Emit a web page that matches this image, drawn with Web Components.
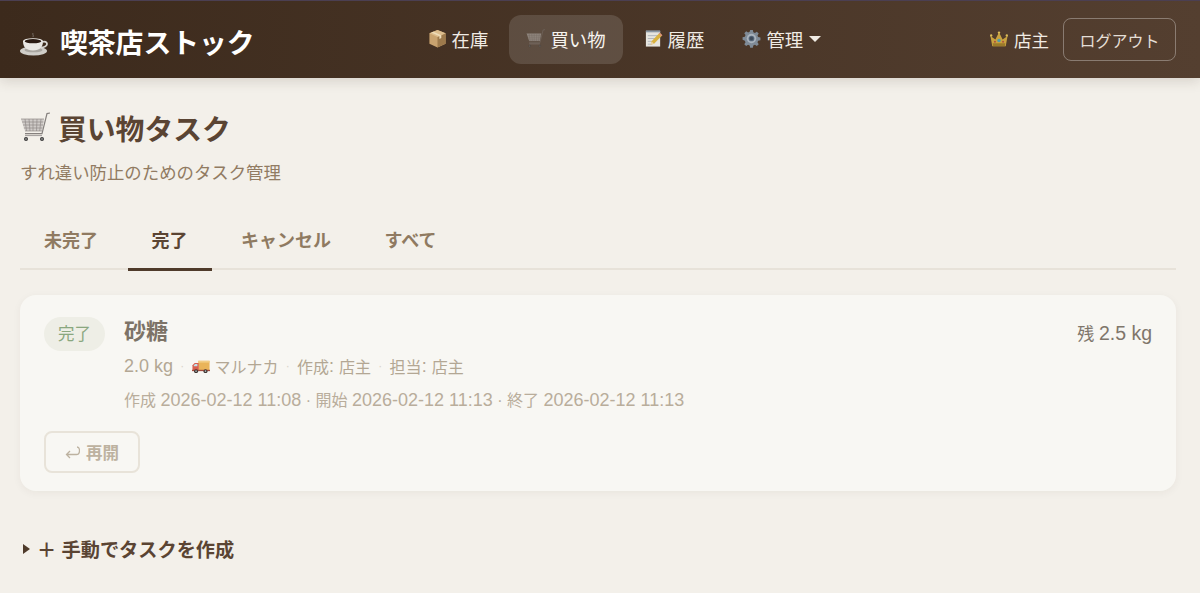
<!DOCTYPE html>
<html lang="ja">
<head>
<meta charset="utf-8">
<title>喫茶店ストック</title>
<style>
  html, body { margin: 0; padding: 0; }
  body {
    background: #f3f0ea;
    color: #5a4433;
    font-family: "Liberation Sans", "Noto Sans CJK JP", sans-serif;
    height: 593px;
    overflow: hidden;
  }
</style>
</head>
<body>
<app-header>
  <nav-link icon="box">在庫</nav-link>
  <nav-link icon="cart" active>買い物</nav-link>
  <nav-link icon="memo">履歴</nav-link>
  <nav-link icon="gear" caret>管理</nav-link>
</app-header>
<page-main>
  <page-title>買い物タスク<span slot="sub">すれ違い防止のためのタスク管理</span></page-title>
  <tab-bar>
    <tab-item>未完了</tab-item>
    <tab-item active>完了</tab-item>
    <tab-item>キャンセル</tab-item>
    <tab-item>すべて</tab-item>
  </tab-bar>
  <task-card></task-card>
  <manual-create>＋ 手動でタスクを作成</manual-create>
</page-main>

<script>
  const icons = {
    cup: `<svg viewBox="0 0 28 24"><path d="M13 1c-1 1.500 1 2 0 4" fill="none" stroke="#8d8780" stroke-width="1" opacity=".7"/><ellipse cx="13.500" cy="19" rx="13.500" ry="4.500" fill="#cfcdc8"/><ellipse cx="13.500" cy="18" rx="9" ry="2.300" fill="#a9a6a0"/><path d="M3 9h20c0 6-3 9.500-10 9.500S3 15 3 9z" fill="#e9e7e3"/><path d="M22 10c3-1 5 0 5 2s-3 3.500-6 3.500" fill="none" stroke="#d9d7d2" stroke-width="1.800"/><ellipse cx="13" cy="9" rx="10" ry="2.800" fill="#f4f3ef"/><ellipse cx="13" cy="9.200" rx="8.400" ry="2.100" fill="#2a1a12"/></svg>`,
    cart: `<svg viewBox="0 0 30 30"><path d="M1 7h23l-2 12H5z" fill="#cfcbc8"/><g stroke="#8f8a88" stroke-width=".7" fill="none"><path d="M1 7h23M2 10h21.500M3 13h20M3.800 16h18.700M5 19h17"/><path d="M5 7l1.500 12M9 7l1 12M13 7v12M17 7l-.5 12M21 7l-1.300 12"/></g><path d="M30 1l-3 .6-5 20H5" fill="none" stroke="#85807e" stroke-width="1.200"/><path d="M5 23.500h17" stroke="#a8a4a2" stroke-width="1.200"/><circle cx="6" cy="27" r="2" fill="#3a3a3a"/><circle cx="22" cy="27" r="2" fill="#3a3a3a"/><circle cx="6" cy="27" r=".8" fill="#bbb"/><circle cx="22" cy="27" r=".8" fill="#bbb"/></svg>`,
    box: `<svg viewBox="0 0 20 20"><path d="M10 1l8.500 3.500v11L10 19.500 1.500 15.500v-11z" fill="#c9a36f"/><path d="M10 8.500l8.500-4v11L10 19.500z" fill="#9d7a4c"/><path d="M1.500 4.500L10 8.500l8.500-4L10 1z" fill="#dcbd8d"/><path d="M5.500 2.800L14 6.500v3l-2 1v-3L3.500 3.700z" fill="#eedcb9"/></svg>`,
    memo: `<svg viewBox="0 0 20 20"><path d="M2 2h15v16.500H2z" fill="#e6e5df"/><path d="M2 1.500h15V3.500H2z" fill="#8a97a3"/><g stroke="#a9b0b8" stroke-width=".9"><path d="M4 7h11M4 10h11M4 13h6M4 16h4"/></g><path d="M7 16.500l1-3.500 8.500-9 2.800 2.600-8.700 9z" fill="#d9b23f"/><path d="M7 16.500l1-3.500 2.600 2.600z" fill="#e9d2a6"/><path d="M16.500 4l2.800 2.600-1 1-2.800-2.600z" fill="#d98d80"/></svg>`,
    gear: `<svg viewBox="0 0 20 20"><path d="M8.600 1h2.800l.5 2.400 1.700.7 2-1.300 2 2-1.300 2 .7 1.700 2.400.5v2.800l-2.400.5-.7 1.700 1.300 2-2 2-2-1.300-1.700.7-.5 2.400H8.600l-.5-2.400-1.700-.7-2 1.300-2-2 1.300-2-.7-1.700L.6 11.400V8.600L3 8.100l.7-1.700-1.300-2 2-2 2 1.300 1.700-.7z" fill="#7f8b97"/><circle cx="10" cy="10" r="5" fill="#a9b3bd"/><circle cx="10" cy="10" r="3" fill="#56677a"/><circle cx="10" cy="10" r="1.800" fill="#3d4a59"/></svg>`,
    crown: `<svg viewBox="0 0 20 18"><path d="M2.500 17L.5 5.500 6 9.500 10 1.500l4 8 5.500-4L17.500 17z" fill="#c9a23f"/><path d="M3 13.500h14l-.5 3.500h-13z" fill="#9a7a2a"/><circle cx="1.300" cy="5" r="1.300" fill="#dcbc58"/><circle cx="10" cy="1.800" r="1.300" fill="#dcbc58"/><circle cx="18.700" cy="5" r="1.300" fill="#dcbc58"/><circle cx="10" cy="10.500" r="1.900" fill="#4f9aa8"/><circle cx="5.500" cy="12" r="1.100" fill="#a9503f"/><circle cx="14.500" cy="12" r="1.100" fill="#a9503f"/></svg>`,
    truck: `<svg viewBox="0 0 20 16"><path d="M7 2h12.500v10.500H7z" fill="#e9b45a"/><path d="M7 2h12.500v2H7z" fill="#f2cd85"/><path d="M.5 7L3 4.500h4.500v8H.5z" fill="#d8604f"/><path d="M2 7l1.500-1.500H6V8H2z" fill="#bfe0ea"/><path d="M0 12h20v1.500H0z" fill="#a34a3c"/><circle cx="4.500" cy="13.500" r="2.200" fill="#3c3532"/><circle cx="15" cy="13.500" r="2.200" fill="#3c3532"/><circle cx="4.500" cy="13.500" r=".9" fill="#bbb"/><circle cx="15" cy="13.500" r=".9" fill="#bbb"/></svg>`
  };

  class EmojiIcon extends HTMLElement {
    connectedCallback() {
      const size = this.getAttribute('size') || 18;
      this.attachShadow({ mode: 'open' }).innerHTML = `
        <style>
          :host { display: inline-flex; width: ${size}px; flex: none; }
          svg { display: block; width: 100%; height: auto; }
        </style>
        ${icons[this.getAttribute('name')]}
      `;
    }
  }
  customElements.define('emoji-icon', EmojiIcon);

  class AppHeader extends HTMLElement {
    constructor() {
      super();
      this.attachShadow({ mode: 'open' }).innerHTML = `
        <style>
          :host {
            display: flex;
            align-items: center;
            box-sizing: border-box;
            height: 78px;
            padding: 0 24px 0 20px;
            border-top: 1px solid #4b3f52;
            background: linear-gradient(90deg, #3c2a1c 0%, #543f30 100%);
            box-shadow: 0 3px 12px rgba(60, 42, 28, .16);
            color: #fff;
            position: relative;
          }
          .brand { display: flex; align-items: center; gap: 12px; padding-top: 9px; font-size: 27.800px; font-weight: 700; line-height: 1; }
          nav { display: flex; gap: 4px; margin-left: 156px; }
          .user { display: flex; align-items: center; margin-left: auto; font-size: 17.500px; color: #f1ece5; }
          .user emoji-icon { margin-right: 6px; }
          button {
            all: unset;
            box-sizing: border-box;
            width: 113px;
            height: 43px;
            margin-left: 14px;
            border: 1px solid rgba(255, 255, 255, .32);
            border-radius: 8px;
            color: #e4ded6;
            font-size: 16px;
            text-align: center;
          }
        </style>
        <div class="brand"><emoji-icon name="cup" size="28"></emoji-icon><span>喫茶店ストック</span></div>
        <nav><slot></slot></nav>
        <div class="user"><emoji-icon name="crown" size="18"></emoji-icon>店主<button>ログアウト</button></div>
      `;
    }
  }
  customElements.define('app-header', AppHeader);

  class NavLink extends HTMLElement {
    connectedCallback() {
      const caret = this.hasAttribute('caret') ? '<i></i>' : '';
      this.attachShadow({ mode: 'open' }).innerHTML = `
        <style>
          :host {
            display: flex;
            align-items: center;
            gap: 5px;
            box-sizing: border-box;
            height: 49px;
            padding: 0 17px 2px;
            border-radius: 12px;
            color: #f0ebe4;
            font-size: 18.400px;
            white-space: nowrap;
          }
          :host([active]) { background: rgba(255, 255, 255, .13); color: #f7f4ef; }
          :host([active]) emoji-icon { opacity: .45; }
          i { width: 0; height: 0; margin-left: 1px; border: 6px solid transparent; border-top-color: #f0ebe4; border-bottom: 0; }
        </style>
        <emoji-icon name="${this.getAttribute('icon')}" size="19"></emoji-icon><slot></slot>${caret}
      `;
    }
  }
  customElements.define('nav-link', NavLink);

  class PageMain extends HTMLElement {
    constructor() {
      super();
      this.attachShadow({ mode: 'open' }).innerHTML = `
        <style>
          :host { display: block; padding: 28px 24px 0 20px; }
        </style>
        <slot></slot>
      `;
    }
  }
  customElements.define('page-main', PageMain);

  class PageTitle extends HTMLElement {
    constructor() {
      super();
      this.attachShadow({ mode: 'open' }).innerHTML = `
        <style>
          :host { display: block; }
          h1 { display: flex; align-items: center; gap: 8px; margin: 0; height: 42px; font-size: 28.800px; font-weight: 700; color: #5a4433; }
          p { margin: 13px 0 0; font-size: 17.400px; line-height: 24px; color: #917b62; }
        </style>
        <h1><emoji-icon name="cart" size="30"></emoji-icon><span><slot></slot></span></h1>
        <p><slot name="sub"></slot></p>
      `;
    }
  }
  customElements.define('page-title', PageTitle);

  class TabBar extends HTMLElement {
    constructor() {
      super();
      this.attachShadow({ mode: 'open' }).innerHTML = `
        <style>
          :host {
            display: flex;
            gap: 5.500px;
            margin-top: 26px;
            height: 59px;
            box-sizing: border-box;
            border-bottom: 2px solid #e7e2d9;
          }
        </style>
        <slot></slot>
      `;
    }
  }
  customElements.define('tab-bar', TabBar);

  class TabItem extends HTMLElement {
    constructor() {
      super();
      this.attachShadow({ mode: 'open' }).innerHTML = `
        <style>
          :host {
            display: flex;
            align-items: center;
            box-sizing: border-box;
            height: 60px;
            padding: 0 24px 2px;
            border-bottom: 3px solid transparent;
            color: #8f7a61;
            font-size: 18px;
            font-weight: 700;
          }
          :host([active]) { color: #5a4433; border-bottom-color: #4f3b2b; }
        </style>
        <slot></slot>
      `;
    }
  }
  customElements.define('tab-item', TabItem);

  class TaskCard extends HTMLElement {
    constructor() {
      super();
      this.attachShadow({ mode: 'open' }).innerHTML = `
        <style>
          :host {
            display: block;
            box-sizing: border-box;
            height: 196px;
            margin-top: 25px;
            padding: 22px 24px 18px;
            border-radius: 16px;
            background: #f8f7f3;
            box-shadow: 0 2px 8px rgba(60, 42, 28, .05);
          }
          .row { display: flex; align-items: flex-start; }
          .badge {
            box-sizing: border-box;
            width: 61px;
            height: 34px;
            margin-right: 19px;
            border-radius: 17px;
            background: #eeeee6;
            color: #8aa77f;
            font-size: 16.500px;
            line-height: 34px;
            text-align: center;
          }
          .body { flex: 1; margin-top: -1px; }
          h3 { margin: 0; height: 32px; font-size: 22px; line-height: 32px; color: #7d7367; font-weight: 700; }
          .meta { display: flex; align-items: center; height: 24px; margin-top: 6px; font-size: 16px; color: #b3a794; white-space: pre; }
          .meta b { width: 18.500px; text-align: center; font-weight: 400; color: #d9d4ca; font-size: 12px; }
          .meta emoji-icon { margin-right: 5px; }
          .times { height: 24px; margin-top: 10px; font-size: 16px; line-height: 24px; color: #b9ad9b; white-space: nowrap; }
          .n { font-size: 18px; }
          .rest { font-size: 17px; line-height: 30px; margin-top: 1px; color: #7f766b; }
          .rest .n { font-size: 19.500px; }
          button {
            all: unset;
            display: flex;
            align-items: center;
            justify-content: center;
            gap: 6px;
            box-sizing: border-box;
            width: 96px;
            height: 42px;
            margin-top: 19px;
            border: 2px solid #e8e3d9;
            border-radius: 8px;
            color: #bdb2a0;
            font-size: 16.500px;
            font-weight: 700;
          }
          button svg { width: 15px; height: 13px; }
        </style>
        <div class="row">
          <div class="badge">完了</div>
          <div class="body">
            <h3>砂糖</h3>
            <div class="meta"><span class="n">2.0 kg</span><b>·</b><emoji-icon name="truck" size="18"></emoji-icon>マルナカ<b>·</b>作成<span class="n">: </span>店主<b>·</b>担当<span class="n">: </span>店主</div>
            <div class="times">作成 <span class="n">2026-02-12 11:08</span> · 開始 <span class="n">2026-02-12 11:13</span> · 終了 <span class="n">2026-02-12 11:13</span></div>
          </div>
          <div class="rest">残 <span class="n">2.5 kg</span></div>
        </div>
        <button aria-label="再開"><svg viewBox="0 0 15 13"><path d="M12 1c2 0 2.500 1.500 2.500 3.500S13.500 8.500 11.500 8.500H1.500M5 5L1.500 8.500 5 12" fill="none" stroke="currentColor" stroke-width="1.300"/></svg><span>再開</span></button>
      `;
    }
  }
  customElements.define('task-card', TaskCard);

  class ManualCreate extends HTMLElement {
    constructor() {
      super();
      this.attachShadow({ mode: 'open' }).innerHTML = `
        <style>
          :host {
            display: flex;
            align-items: center;
            height: 28px;
            margin-top: 44px;
            color: #5a4433;
            font-size: 19.200px;
            font-weight: 700;
          }
          i { width: 0; height: 0; margin: 0 7px 0 3px; border: 5px solid transparent; border-left: 7px solid #4f3b2b; border-right: 0; }
        </style>
        <i></i><slot></slot>
      `;
    }
  }
  customElements.define('manual-create', ManualCreate);
</script>
</body>
</html>
